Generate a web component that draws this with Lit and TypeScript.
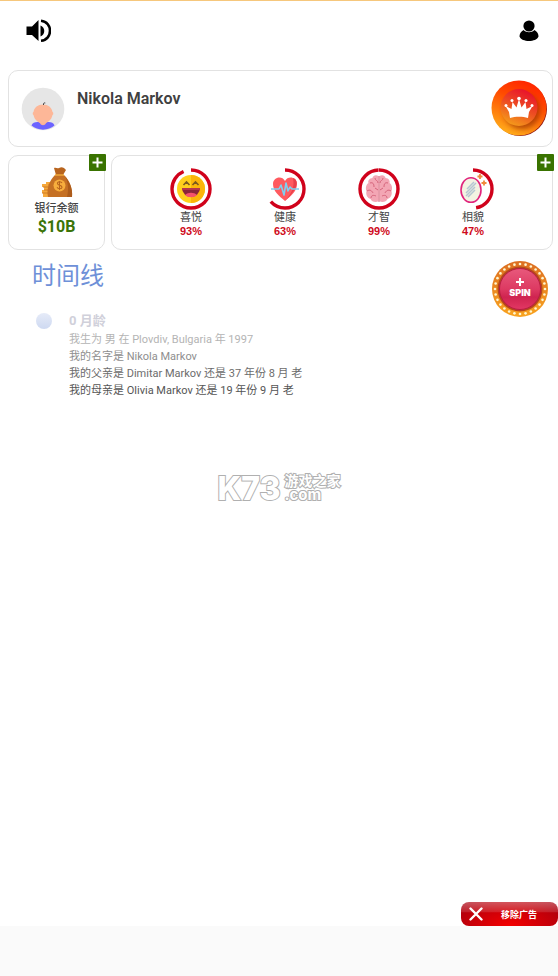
import { LitElement, html, css, svg } from "lit";
import { customElement } from "lit/decorators.js";

const joyIcon = svg`
  <circle cx="21" cy="21" r="14" fill="#ffd01c"/>
  <path d="M21 7a14 14 0 0 1 0 28z" fill="#fbb40a"/>
  <path d="M12 20h18a9 9 0 0 1-18 0z" fill="#8a2539"/>
  <path d="M12 20h18v2H12z" fill="#b5364a"/>
  <path d="M15 27c3-3 9-3 12 0-3 3-9 3-12 0z" fill="#f4536b"/>
  <path d="M13.500 17l3-3 3 3M22.500 17l3-3 3 3" fill="none" stroke="#7c5a1d" stroke-width="1.600"/>`;

const heartIcon = svg`
  <path d="M21 33C15 28 9 23 9 16c0-7 9-9 12-3 3-6 12-4 12 3 0 7-6 12-12 17z" fill="#ff5a5f"/>
  <path d="M29 10c7 2 4 12-8 23 6-7 10-13 8-23z" fill="#e8404a"/>
  <path d="M7 21h8l2-4 3 10 2-12 2 8 2-4 2 2h7" fill="none" stroke="#7fd0f0" stroke-width="1.600" stroke-linejoin="round"/>`;

const brainIcon = svg`
  <path d="M20.500 8c-3-2-6 0-6 2-3 0-5 3-4 5-3 2-3 6-2 8-1 4 1 7 4 8 1 3 6 4 8 2z" fill="#f3a6b4"/>
  <path d="M21.500 8c3-2 6 0 6 2 3 0 5 3 4 5 3 2 3 6 2 8 1 4-1 7-4 8-1 3-6 4-8 2z" fill="#f3a6b4"/>
  <path d="M21 8v26M17 10c0 3 3 2 3 5M12 15c3-1 4 1 4 4M9 23c3-2 5 0 6 2M13 30c0-3 3-3 5-2M17 20l3 2M25 10c0 3-3 2-3 5M30 15c-3-1-4 1-4 4M33 23c-3-2-5 0-6 2M29 30c0-3-3-3-5-2M25 20l-3 2"
    fill="none" stroke="#d5647b" stroke-width="1"/>`;

const mirrorIcon = svg`
  <ellipse cx="19" cy="22" rx="10" ry="12.300" fill="#f3f2e2" stroke="#e0247c" stroke-width="1.600"/>
  <path d="M15 21l7-7M14 25l10-10M14 28l9-9M16 29l7-7" stroke="#b4c6d2" stroke-width="1.500"/>
  <path d="M28 6v5M25.500 8.500h5M32 12.500v5M29.500 15h5" stroke="#f08a3c" stroke-width="1.800"/>`;

const STATS = [
  { label: "喜悦", value: 93, icon: joyIcon },
  { label: "健康", value: 63, icon: heartIcon },
  { label: "才智", value: 99, icon: brainIcon },
  { label: "相貌", value: 47, icon: mirrorIcon },
];

const EVENTS = [
  "我生为 男 在 Plovdiv, Bulgaria 年 1997",
  "我的名字是 Nikola Markov",
  "我的父亲是 Dimitar Markov 还是 37 年份 8 月 老",
  "我的母亲是 Olivia Markov 还是 19 年份 9 月 老",
];

const RING_RADIUS = 19;
const RING_LENGTH = 2 * Math.PI * RING_RADIUS;

const bulbs = Array.from({ length: 28 }, (_, i) => {
  const angle = (i / 28) * 2 * Math.PI;
  return svg`<circle cx=${28 + 25 * Math.cos(angle)} cy=${28 + 25 * Math.sin(angle)} r="1.3" fill="#fff6cf"/>`;
});

@customElement("app-root")
export class AppRoot extends LitElement {
  static styles = css`
    :host {
      display: flex;
      flex-direction: column;
      position: relative;
      min-height: 100vh;
      box-sizing: border-box;
      border-top: 1px solid #f6c77c;
      background: #fff;
      color: #444;
      font-family: Roboto, "Noto Sans CJK SC", sans-serif;
    }
    button {
      border: 0;
      padding: 0;
      background: none;
      font: inherit;
      color: inherit;
      cursor: pointer;
    }
    svg { display: block; }
    h1, h2, h3, p, ul { margin: 0; padding: 0; }
    ul { list-style: none; }
    header {
      display: flex;
      justify-content: space-between;
      align-items: center;
      height: 60px;
      padding: 0 19px 0 25px;
    }
    main {
      flex: 1;
      display: flex;
      flex-direction: column;
      gap: 8px;
      padding: 9px 5px 0 8px;
    }
    .card {
      position: relative;
      box-sizing: border-box;
      border: 1px solid #e2e2e2;
      border-radius: 10px;
      background: #fff;
    }
    .profile {
      display: flex;
      gap: 12px;
      height: 77px;
      padding: 0 4px 0 12px;
      align-items: center;
    }
    .name {
      flex: 1;
      align-self: flex-start;
      padding-top: 16px;
      font-size: 16px;
      line-height: 24px;
      font-weight: 600;
      color: #404040;
    }
    .row { display: flex; gap: 6px; }
    .bank {
      width: 97px;
      height: 95px;
      display: flex;
      flex-direction: column;
      align-items: center;
      padding-top: 11px;
    }
    .bank-label {
      font-size: 11px;
      line-height: 16px;
      font-weight: 500;
      padding-top: 3px;
    }
    .bank-value {
      font-size: 16px;
      line-height: 20px;
      font-weight: 700;
      color: #3b7408;
    }
    .stats {
      flex: 1;
      display: flex;
      padding: 12px 32px 0;
    }
    .stat {
      flex: 1;
      display: flex;
      flex-direction: column;
      align-items: center;
    }
    .stat-label { font-size: 11px; line-height: 16px; }
    .stat-value {
      font: 700 11px/10px "Liberation Sans", sans-serif;
      color: #cf0a20;
    }
    .add {
      position: absolute;
      top: -2px;
      right: -2px;
    }
    .timeline-head {
      display: flex;
      justify-content: space-between;
      align-items: flex-start;
      padding: 3px 5px 0 24px;
    }
    .timeline-head h2 {
      font-size: 24px;
      line-height: 30px;
      font-weight: 400;
      color: #6e90d8;
    }
    .entry {
      display: flex;
      gap: 17px;
      padding-left: 28px;
      margin-top: -14px;
    }
    .dot {
      width: 16px;
      height: 16px;
      margin-top: 2px;
      border-radius: 50%;
      background: linear-gradient(#e6ebf8, #ced9f1);
    }
    .entry h3 {
      font-size: 13px;
      line-height: 20px;
      font-weight: 700;
      color: #d0d0da;
    }
    .events {
      font-size: 11px;
      line-height: 17px;
      color: #555;
    }
    .events li:nth-child(1) { color: #b4b4b4; }
    .events li:nth-child(2) { color: #8e8e8e; }
    .events li:nth-child(3) { color: #6c6c6c; }
    .watermark {
      position: absolute;
      inset: 0;
      display: flex;
      align-items: center;
      justify-content: center;
      gap: 4px;
      pointer-events: none;
      color: #fff;
      -webkit-text-stroke: 2px #b0b0b0;
      paint-order: stroke fill;
    }
    .mark { font: 800 32px/32px Inter, sans-serif; }
    .site {
      display: flex;
      flex-direction: column;
      gap: 1px;
      font: 700 14px/12px "Noto Sans CJK SC", sans-serif;
    }
    .site .domain { font: 700 15px/16px Inter, sans-serif; }
    .ads {
      display: flex;
      justify-content: flex-end;
    }
    .remove {
      display: flex;
      align-items: center;
      width: 97px;
      height: 24px;
      padding-left: 8px;
      gap: 18px;
      border-radius: 8px;
      color: #fff;
      font-size: 9px;
      font-weight: 700;
      background:
        linear-gradient(#ffffff55, #ffffff22 40%, #ffffff00 45%),
        radial-gradient(ellipse at 50% 100%, #f40000, #c90008 55%, #a40010);
    }
    footer { height: 50px; background: #fafafa; }
  `;

  private plus(name: string) {
    return html`<button class="add" aria-label=${name}>
      <svg width="17" height="17" viewBox="0 0 17 17">
        <rect width="17" height="17" rx="1" fill="#397300"/>
        <path d="M8.500 3.500v10M3.500 8.500h10" stroke="#fff" stroke-width="2"/>
      </svg>
    </button>`;
  }

  render() {
    return html`
      <header>
        <button aria-label="声音">
          <svg width="26" height="26" viewBox="0 0 26 26">
            <path d="M1.500 8.500H7l6.500-6.500v21L7 17H1.500z"/>
            <path d="M15.500 7.500c5 2 5 9 0 11z"/>
            <path d="M16 2.800c12 1 12 19 0 20" fill="none" stroke="#000" stroke-width="2.600"/>
          </svg>
        </button>
        <button aria-label="个人资料">
          <svg width="20" height="22" viewBox="0 0 20 22">
            <ellipse cx="10" cy="6" rx="5.600" ry="5.500"/>
            <path d="M4.500 10c3 3 8 3 11 0 3 2 4 4 4 6.500-2 6-17 6-19 0 0-2.500 1-4.500 4-6.500z"/>
          </svg>
        </button>
      </header>
      <main>
        <section class="card profile">
          <svg width="44" height="44" viewBox="0 0 44 44">
            <circle cx="22" cy="22" r="21.300" fill="#e6e6e6"/>
            <path d="M10.500 38.500c1-3 3-3.500 6-3.500h11c3 0 5 .5 6 3.500-6 5.500-17 5.500-23 0z" fill="#6c63ff"/>
            <path d="M19 33h6v3c-1 3-5 3-6 0z" fill="#fbb195"/>
            <path d="M22 17.500c5 0 9 3 9.500 7.500 1 0 1 3 0 3-1 5-5 8-9.500 9-4.500-1-8.500-4-9.500-9-1 0-1-3 0-3 .5-4.500 4.500-7.500 9.500-7.500z" fill="#fdb798"/>
            <path d="M22.500 18c0-1.500 0-2.500 1.800-2" fill="none" stroke="#444" stroke-width="1"/>
          </svg>
          <h1 class="name">Nikola Markov</h1>
          <button aria-label="皇冠">
            <svg width="57" height="57" viewBox="0 0 57 57">
              <defs>
                <linearGradient id="outer" x1=".65" y1="0" x2=".25" y2="1">
                  <stop offset="0" stop-color="#ff2400"/><stop offset=".35" stop-color="#ff4b00"/>
                  <stop offset="1" stop-color="#ffb31c"/>
                </linearGradient>
                <linearGradient id="inner" x1=".7" y1="0" x2=".25" y2="1">
                  <stop offset="0" stop-color="#e80f2c"/><stop offset=".5" stop-color="#ed4f22"/>
                  <stop offset="1" stop-color="#f5a01a"/>
                </linearGradient>
                <filter id="soft" x="-30%" y="-30%" width="160%" height="160%"><feGaussianBlur stdDeviation="2.500"/></filter>
              </defs>
              <circle cx="29" cy="29" r="27" fill="#8e1412"/>
              <circle cx="28" cy="28" r="27.500" fill="url(#outer)"/>
              <circle cx="31" cy="31" r="18" fill="#8c2505" opacity=".6" filter="url(#soft)"/>
              <circle cx="28" cy="27.500" r="18.500" fill="url(#inner)"/>
              <path d="M19 38l-1-6-3.500-6 6 3 1-7 4 5.500L28 19l2.500 8.500 4-5.500 1 7 6-3-3.500 6-1 6c-5-1.800-13-1.800-18 0z" fill="#fff"/>
              <g fill="#fff">
                <circle cx="15" cy="25.500" r="1.500"/><circle cx="21" cy="20.500" r="1.500"/>
                <circle cx="28" cy="18.500" r="1.800"/><circle cx="35" cy="20.500" r="1.500"/>
                <circle cx="41" cy="25.500" r="1.500"/>
              </g>
            </svg>
          </button>
        </section>
        <div class="row">
          <section class="card bank">
            <svg width="32" height="31" viewBox="0 0 32 31">
              <path d="M1 17h8v3H1zM3 20h8v3H3zM1 23h8v3H1zM2 26h9v4H2zM5 15h6v3H5z" fill="#f5a83c"/>
              <path d="M2 20h7M3 23h6M1 26h8M7 18h3" stroke="#d17a22" stroke-width="1"/>
              <path d="M14 8h9c5 5 9 13 8 22H7c-2-9 2-17 7-22z" fill="#c57024"/>
              <path d="M24 9c4 5 8 12 7 21h-5c2-8 1-15-2-21z" fill="#ad5c1b"/>
              <path d="M13 1c2-1 3 1 5 0s3-1 5 0l2 2-3 5h-7z" fill="#b8641e"/>
              <path d="M14 8h9" stroke="#f0a83a" stroke-width="1.500"/>
              <circle cx="18.500" cy="18.500" r="6" fill="#f7ad3d"/>
              <path d="M21 16c-1-2-5-1.500-4.500.6.500 2 4.500 1.500 4.500 3.700 0 2-4 2-5 0M18.500 14v9" fill="none" stroke="#b8641e" stroke-width="1.100"/>
            </svg>
            <p class="bank-label">银行余额</p>
            <p class="bank-value">$10B</p>
            ${this.plus("增加余额")}
          </section>
          <section class="card stats">
            ${STATS.map(
              (stat) => html`<div class="stat">
                <svg width="42" height="42" viewBox="0 0 42 42">
                  <circle cx="21" cy="21" r=${RING_RADIUS} fill="none" stroke="#d0021b" stroke-width="3.400"
                    stroke-dasharray="${(RING_LENGTH * stat.value) / 100} ${RING_LENGTH}"
                    transform="rotate(-90 21 21)"/>
                  ${stat.icon}
                </svg>
                <p class="stat-label">${stat.label}</p>
                <p class="stat-value">${stat.value}%</p>
              </div>`
            )}
            ${this.plus("增加属性")}
          </section>
        </div>
        <div class="timeline-head">
          <h2>时间线</h2>
          <button aria-label="SPIN">
            <svg width="56" height="56" viewBox="0 0 56 56">
              <defs>
                <linearGradient id="rim" x1="0" y1="0" x2="0" y2="1">
                  <stop offset="0" stop-color="#dc6e22"/><stop offset="1" stop-color="#f9a31f"/>
                </linearGradient>
                <linearGradient id="face" x1="0" y1="0" x2="0" y2="1">
                  <stop offset="0" stop-color="#e8597c"/><stop offset=".5" stop-color="#dd3a62"/>
                  <stop offset=".7" stop-color="#cf2450"/><stop offset="1" stop-color="#e23864"/>
                </linearGradient>
              </defs>
              <circle cx="28" cy="28" r="28" fill="url(#rim)"/>
              ${bulbs}
              <circle cx="28" cy="28" r="22.500" fill="#b5481c"/>
              <circle cx="28" cy="28" r="20.500" fill="url(#face)" stroke="#b81c43"/>
              <path d="M28 17v8M24 21h8" stroke="#fff" stroke-width="2"/>
              <text x="28" y="35" text-anchor="middle" fill="#fff" font-family="Inter, sans-serif" font-size="9" font-weight="900">SPIN</text>
            </svg>
          </button>
        </div>
        <article class="entry">
          <div class="dot"></div>
          <div>
            <h3>0 月龄</h3>
            <ul class="events">${EVENTS.map((text) => html`<li>${text}</li>`)}</ul>
          </div>
        </article>
      </main>
      <div class="ads">
        <button class="remove">
          <svg width="14" height="14" viewBox="0 0 14 14" aria-hidden="true">
            <path d="M1.500 1.500l11 11M12.500 1.500l-11 11" stroke="#fff" stroke-width="2.400" stroke-linecap="round"/>
          </svg>
          移除广告
        </button>
      </div>
      <footer></footer>
      <div class="watermark">
        <span class="mark">K73</span>
        <div class="site"><span>游戏之家</span><span class="domain">.com</span></div>
      </div>
    `;
  }
}
